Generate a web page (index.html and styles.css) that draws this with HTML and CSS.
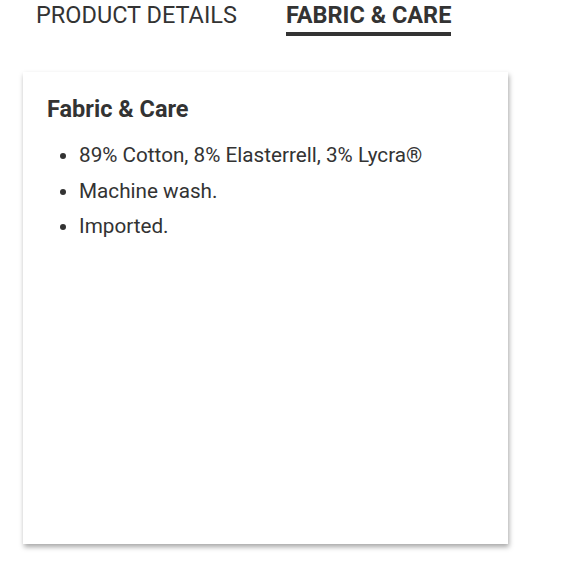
FILE: index.html
```html
<!DOCTYPE html>
<html>
<head>
<meta charset="utf-8">
<link rel="stylesheet" href="styles.css">
</head>
<body>
<div class="tabs">
  <div class="tab">PRODUCT DETAILS</div>
  <div class="tab active">FABRIC &amp; CARE</div>
</div>
<div class="card">
  <h2 class="card-title">Fabric &amp; Care</h2>
  <ul class="list">
    <li>89% Cotton, 8% Elasterrell, 3% Lycra®</li>
    <li>Machine wash.</li>
    <li>Imported.</li>
  </ul>
</div>
</body>
</html>
```
FILE: styles.css
```css
html, body { margin: 0; padding: 0; background: #fff; }
body { font-family: Roboto, "Liberation Sans", sans-serif; color: #333; width: 580px; height: 580px; overflow: hidden; }
.tabs { display: flex; gap: 49px; padding-left: 36px; height: 36px; }
.tab { font-size: 23.5px; line-height: 30px; color: #333; height: 36px; box-sizing: border-box; white-space: nowrap; }
.tab.active { font-weight: 700; border-bottom: 4px solid #333; padding-bottom: 2px; }
.card { margin: 36px 0 0 23px; width: 485px; height: 472px; box-sizing: border-box; background: #fff; box-shadow: 1px 3px 5px rgba(0,0,0,0.35); padding: 22px 24px; }
.card-title { margin: 0; font-size: 23.5px; font-weight: 700; line-height: 30px; color: #333; }
.list { margin: 14px 0 0; padding-left: 32px; font-size: 20.7px; line-height: 35.5px; }
.list li { margin: 0; }
```
